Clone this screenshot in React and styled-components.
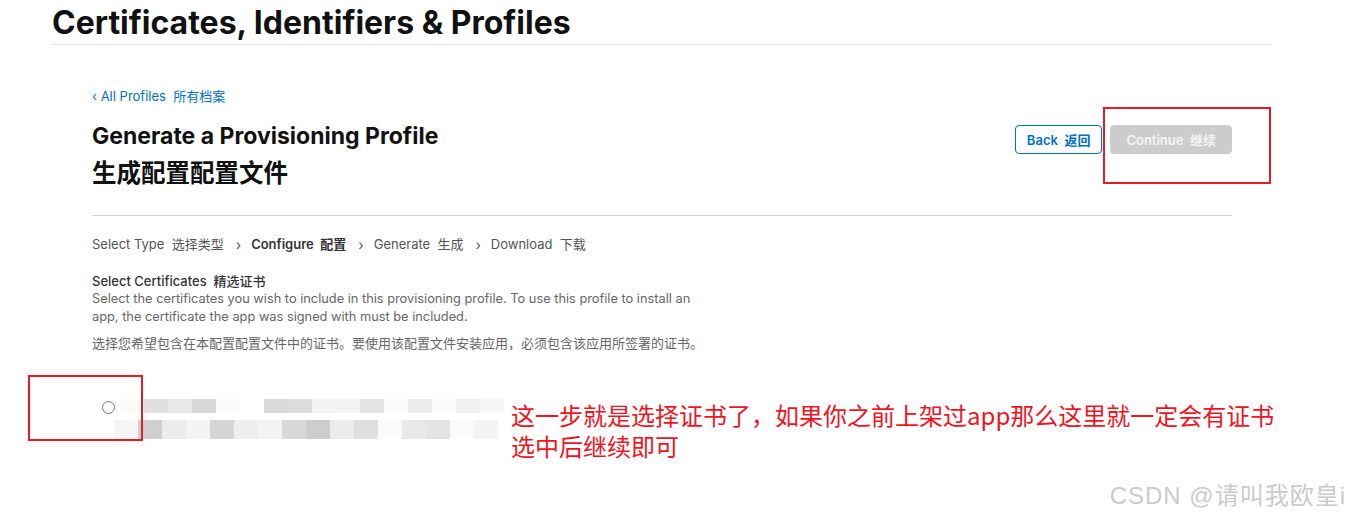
import styled, { createGlobalStyle } from 'styled-components'

const Global = createGlobalStyle`
body {
  margin: 0;
  background: #fff;
  font-family: Inter, "Noto Sans CJK SC", sans-serif;
  color: #1d1d1f;
}
`

const Page = styled.div`
position: relative;
width: 1350px;
height: 516px;
overflow: hidden;
`

const Header = styled.div`
margin: 0 78px 0 52px;
padding-top: 5px;
height: 39px;
border-bottom: 1px solid #e3e3e3;
`

const BigTitle = styled.h1`
margin: 0;
font-size: 32px;
line-height: 36px;
font-weight: 700;
color: #111;
`

const Main = styled.div`
margin: 0 118px 0 92px;
padding-top: 43px;
`

const BackLink = styled.a`
display: block;
font-size: 13px;
line-height: 16px;
color: #0070c9;
text-decoration: none;
`

const TitleRow = styled.div`
display: flex;
justify-content: space-between;
align-items: flex-start;
padding-bottom: 24px;
border-bottom: 1px solid #d6d6d6;
`

const TitleBlock = styled.div`
padding-top: 17px;
`

const Title = styled.h2`
margin: 0;
font-size: 23px;
line-height: 30px;
font-weight: 700;
color: #111;
`

const SubTitle = styled.h2`
margin: 4px 0 0;
font-size: 24.5px;
line-height: 36px;
font-weight: 700;
color: #111;
`

const Buttons = styled.div`
display: flex;
gap: 8px;
padding-top: 21px;
`

const Button = styled.button`
height: 29px;
padding: 0 ${p => (p.$primary ? '15px' : '11px')};
border-radius: 4px;
font-family: inherit;
font-size: 13px;
font-weight: 600;
border: 1px solid ${p => (p.$primary ? '#cccccc' : '#0070c9')};
background: ${p => (p.$primary ? '#cccccc' : '#fff')};
color: ${p => (p.$primary ? '#f4f4f4' : '#0070c9')};
`

const Steps = styled.div`
display: flex;
align-items: center;
padding-top: 18px;
font-size: 13px;
line-height: 18px;
`

const Step = styled.span`
color: ${p => (p.$active ? '#333' : '#555')};
font-weight: ${p => (p.$active ? 600 : 400)};
`

const Chevron = styled.span`
margin: 2px 10px 0 12px;
color: #555;
font-size: 14px;
`

const Section = styled.div`
padding-top: 18px;
width: 620px;
`

const Label = styled.div`
font-size: 13px;
line-height: 18px;
color: #333;
font-weight: 500;
`

const Desc = styled.p`
margin: 0;
font-size: 12.8px;
line-height: 18px;
color: #666;
`

const DescCn = styled(Desc)`
margin-top: 8px;
font-size: 13px;
white-space: nowrap;
`

const CertArea = styled.div`
display: flex;
padding: 47px 0 0 10px;
gap: 5px;
`

const Radio = styled.span`
width: 11px;
height: 11px;
margin-top: 2px;
border: 1px solid #777;
border-radius: 50%;
flex: none;
`

const Mosaic = styled.div`
display: flex;
flex-direction: column;
gap: 7px;
`

const MosaicRow = styled.div`
display: flex;
height: ${p => p.$h}px;
margin-left: ${p => p.$off}px;
`

const Cell = styled.span`
width: 24px;
height: 100%;
`

const Box = styled.div`
position: absolute;
border: 2px solid #e51c23;
`

const Note = styled.div`
position: absolute;
left: 511px;
top: 399px;
font-family: "Noto Sans CJK SC", sans-serif;
font-size: 24px;
line-height: 31px;
color: #f0141e;
`

const Watermark = styled.div`
position: absolute;
right: 4px;
top: 476px;
font-family: "Liberation Sans", "Noto Sans CJK SC", sans-serif;
font-size: 24px;
letter-spacing: 1px;
color: #cbcbcb;
`

const row1 = ['#fafafa', '#e0e0e0', '#e8e8e8', '#d8d8d8', '#fbfbfb', '#fff', '#d9d9d9', '#dcdcdc', '#f4f4f4', '#f2f2f2', '#e3e3e3', '#fafafa', '#ececec', '#fafafa', '#f0f0f0', '#f6f6f6']
const row2 = ['#f6f6f6', '#cfcfcf', '#ececec', '#f4f4f4', '#d6d6d6', '#eeeeee', '#f3f3f3', '#d8d8d8', '#cdcdcd', '#ececec', '#dfdfdf', '#fafafa', '#e9e9e9', '#e4e4e4', '#fafafa', '#f4f4f4']

export default function App() {
  return (
    <Page>
      <Global />
      <Header>
        <BigTitle>Certificates, Identifiers &amp; Profiles</BigTitle>
      </Header>
      <Main>
        <BackLink href="#">‹ All Profiles&nbsp; 所有档案</BackLink>
        <TitleRow>
          <TitleBlock>
            <Title>Generate a Provisioning Profile</Title>
            <SubTitle>生成配置配置文件</SubTitle>
          </TitleBlock>
          <Buttons>
            <Button>Back&nbsp; 返回</Button>
            <Button $primary>Continue&nbsp; 继续</Button>
          </Buttons>
        </TitleRow>
        <Steps>
          <Step>Select Type&nbsp; 选择类型</Step>
          <Chevron>›</Chevron>
          <Step $active>Configure&nbsp; 配置</Step>
          <Chevron>›</Chevron>
          <Step>Generate&nbsp; 生成</Step>
          <Chevron>›</Chevron>
          <Step>Download&nbsp; 下载</Step>
        </Steps>
        <Section>
          <Label>Select Certificates&nbsp; 精选证书</Label>
          <Desc>
            Select the certificates you wish to include in this provisioning profile. To use this profile to install an app, the certificate the app was signed with must be included.
          </Desc>
          <DescCn>选择您希望包含在本配置配置文件中的证书。要使用该配置文件安装应用，必须包含该应用所签署的证书。</DescCn>
        </Section>
        <CertArea>
          <Radio />
          <Mosaic>
            <MosaicRow $h={14} $off={0}>
              {row1.map((c, i) => <Cell key={i} style={{ background: c }} />)}
            </MosaicRow>
            <MosaicRow $h={19} $off={-6}>
              {row2.map((c, i) => <Cell key={i} style={{ background: c }} />)}
            </MosaicRow>
          </Mosaic>
        </CertArea>
      </Main>
      <Box style={{ left: 1103, top: 107, width: 164, height: 73 }} />
      <Box style={{ left: 28, top: 375, width: 111, height: 62 }} />
      <Note>
        这一步就是选择证书了，如果你之前上架过app那么这里就一定会有证书
        <br />
        选中后继续即可
      </Note>
      <Watermark>CSDN @请叫我欧皇i</Watermark>
    </Page>
  )
}
